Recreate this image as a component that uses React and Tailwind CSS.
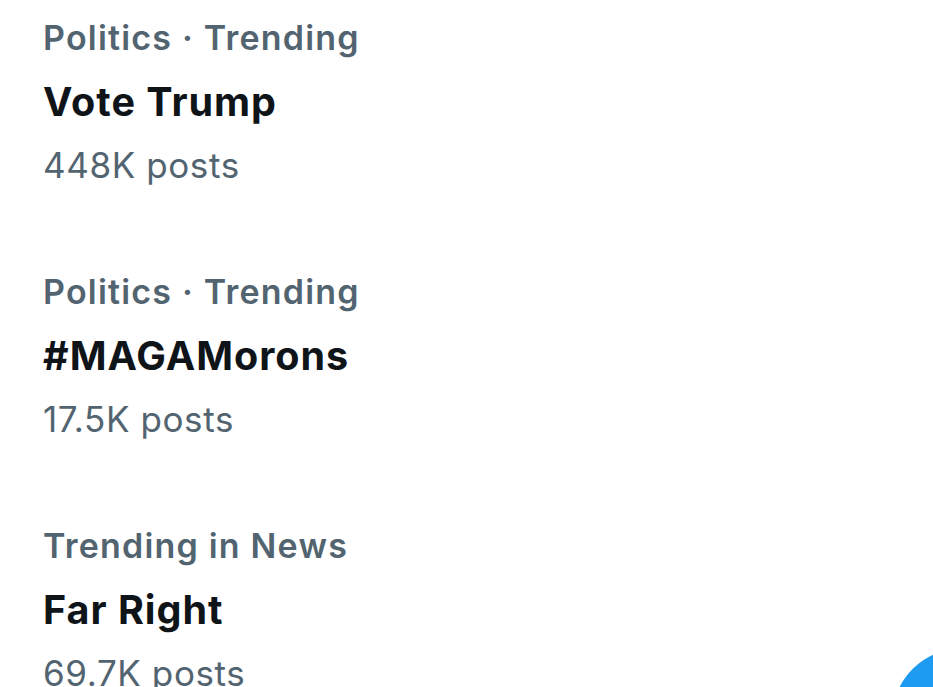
import React from "react";

const items = [
  { cat: "Politics · Trending", title: "Vote Trump", posts: "448K posts" },
  { cat: "Politics · Trending", title: "#MAGAMorons", posts: "17.5K posts" },
  { cat: "Trending in News", title: "Far Right", posts: "69.7K posts" },
];

export default function App() {
  return (
    <div className="relative w-[933px] h-[687px] overflow-hidden bg-white" style={{ fontFamily: "Inter, 'Noto Sans', sans-serif" }}>
      <div className="flex flex-col gap-[62px] pt-[5px] pl-[43px]">
        {items.map((it, i) => (
          <div key={i} className="flex flex-col">
            <div className="h-[64px] flex items-center text-[34px] font-semibold tracking-[1.2px] text-[#536471] whitespace-nowrap">{it.cat}</div>
            <div className="h-[64px] pt-[3px] flex items-center text-[39.5px] font-bold tracking-[1px] text-[#0f1419] whitespace-nowrap">{it.title}</div>
            <div className="h-[64px] flex items-center text-[35px] font-normal tracking-[0.6px] text-[#536471] whitespace-nowrap">{it.posts}</div>
          </div>
        ))}
      </div>
      <div className="absolute left-[892px] top-[648px] w-[142px] h-[142px] rounded-full bg-[#1d9bf0]" />
    </div>
  );
}
